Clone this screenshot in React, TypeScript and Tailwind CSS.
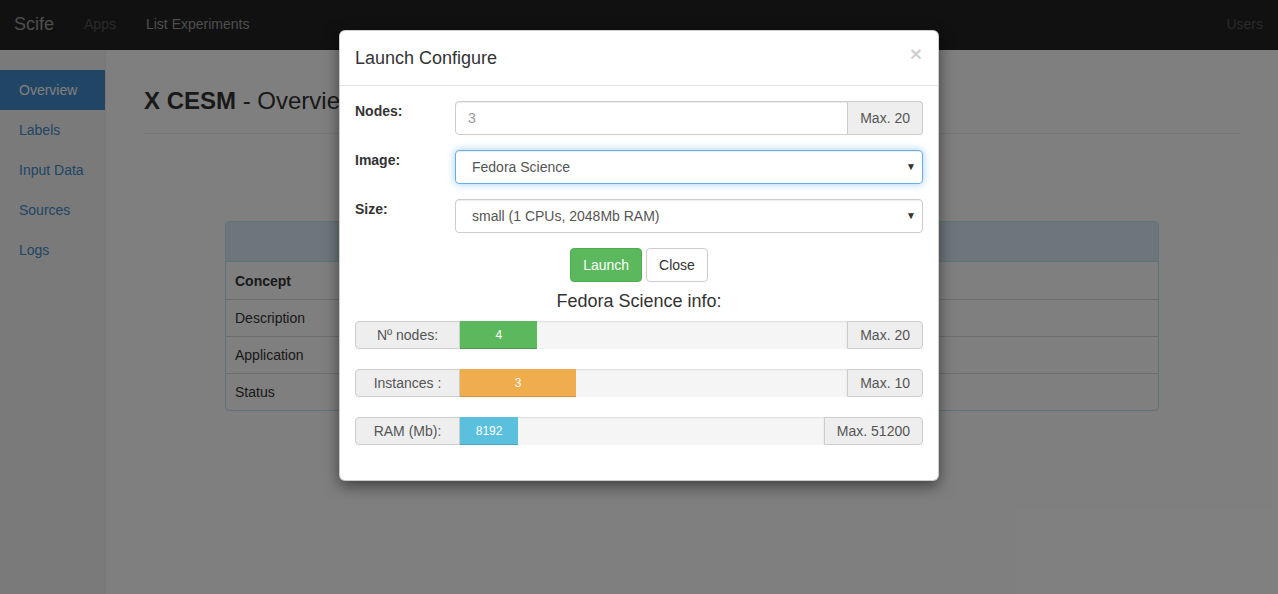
import React from "react";

function ProgressRow({
  label,
  value,
  max,
  pct,
  color,
}: {
  label: string;
  value: string;
  max: string;
  pct: string;
  color: string;
}) {
  return (
    <div className="flex h-[28px] mb-[20px]">
      <div className="w-[105px] shrink-0 flex items-center justify-center bg-[#eeeeee] border border-[#cccccc] rounded-l-[4px] text-[#555555]">
        {label}
      </div>
      <div className="flex-1 flex bg-[#f5f5f5] shadow-[inset_0_1px_2px_rgba(0,0,0,0.1)]">
        <div
          className={`${pct} ${color} h-full flex items-center justify-center text-white text-[12px] shadow-[inset_0_-1px_0_rgba(0,0,0,0.15)]`}
        >
          {value}
        </div>
      </div>
      <div className="shrink-0 flex items-center px-[12px] bg-[#eeeeee] border border-[#cccccc] rounded-r-[4px] text-[#555555]">
        {max}
      </div>
    </div>
  );
}

export default function App() {
  return (
    <div className="relative w-full h-[594px] overflow-hidden bg-white font-['Liberation_Sans',Arial,sans-serif] text-[14px] leading-[20px] text-[#333333]">
      {/* Navbar */}
      <div className="h-[50px] bg-[#222222] flex items-center">
        <div className="pl-[14px] pr-[15px] text-[18px] text-[#9d9d9d] -mt-[2px]">Scife</div>
        <div className="px-[15px] text-[#555555] -mt-[2px]">Apps</div>
        <div className="px-[15px] text-[#9d9d9d] -mt-[2px]">List Experiments</div>
        <div className="ml-auto pr-[15px] text-[#555555] -mt-[2px]">Users</div>
      </div>

      <div className="flex h-[544px]">
        {/* Sidebar */}
        <div className="w-[106px] shrink-0 bg-[#f5f5f5] border-r border-[#eeeeee] pt-[20px]">
          <div className="h-[40px] flex items-center pl-[19px] bg-[#428bca] text-white">Overview</div>
          <div className="h-[40px] flex items-center pl-[19px] text-[#428bca]">Labels</div>
          <div className="h-[40px] flex items-center pl-[19px] text-[#428bca]">Input Data</div>
          <div className="h-[40px] flex items-center pl-[19px] text-[#428bca]">Sources</div>
          <div className="h-[40px] flex items-center pl-[19px] text-[#428bca]">Logs</div>
        </div>

        {/* Main */}
        <div className="flex-1 pl-[38px] pr-[38px]">
          <div className="mt-[38px] pb-[19px] border-b border-[#eeeeee]">
            <div className="text-[24px] leading-[26px]">
              <span className="font-bold">X CESM</span> - Overview
            </div>
          </div>
          <div className="w-[934px] mx-auto mt-[87px] border border-[#bce8f1] rounded-[4px] overflow-hidden">
            <div className="h-[40px] bg-[#d9edf7] border-b border-[#bce8f1]"></div>
            <div className="h-[37px] flex items-center px-[9px] font-bold">Concept</div>
            <div className="h-[37px] flex items-center px-[9px] border-t border-[#dddddd]">Description</div>
            <div className="h-[37px] flex items-center px-[9px] border-t border-[#dddddd]">Application</div>
            <div className="h-[37px] flex items-center px-[9px] border-t border-[#dddddd]">Status</div>
          </div>
        </div>
      </div>

      {/* Backdrop */}
      <div className="absolute inset-0 bg-black/50"></div>

      {/* Modal */}
      <div className="absolute inset-0">
        <div className="ml-[339px] mt-[30px] w-[600px] bg-white border border-black/20 rounded-[6px] shadow-[0_5px_15px_rgba(0,0,0,0.5)]">
          <div className="flex items-center justify-between h-[55px] px-[15px] border-b border-[#e5e5e5]">
            <div className="text-[18px] leading-[24px] text-[#333333]">Launch Configure</div>
            <div className="text-[21px] font-bold leading-[21px] text-black/20 -mt-[9px] pr-[1px]">×</div>
          </div>
          <div className="p-[15px]">
            {/* Nodes */}
            <div className="flex mb-[15px]">
              <div className="w-[100px] shrink-0 font-bold">Nodes:</div>
              <div className="flex-1 flex h-[34px]">
                <div className="flex-1 flex items-center px-[12px] border border-[#cccccc] rounded-l-[4px] text-[#999999] shadow-[inset_0_1px_1px_rgba(0,0,0,0.075)]">
                  3
                </div>
                <div className="flex items-center px-[12px] bg-[#eeeeee] border border-l-0 border-[#cccccc] rounded-r-[4px] text-[#555555]">
                  Max. 20
                </div>
              </div>
            </div>
            {/* Image */}
            <div className="flex mb-[15px]">
              <div className="w-[100px] shrink-0 font-bold">Image:</div>
              <div className="flex-1 h-[34px] flex items-center pl-[16px] pr-[6px] border border-[#66afe9] rounded-[4px] text-[#555555] shadow-[inset_0_1px_1px_rgba(0,0,0,0.075),0_0_8px_rgba(102,175,233,0.6)]">
                <span className="flex-1">Fedora Science</span>
                <span className="text-[10px] text-[#333333]">▼</span>
              </div>
            </div>
            {/* Size */}
            <div className="flex mb-[15px]">
              <div className="w-[100px] shrink-0 font-bold">Size:</div>
              <div className="flex-1 h-[34px] flex items-center pl-[16px] pr-[6px] border border-[#cccccc] rounded-[4px] text-[#555555] shadow-[inset_0_1px_1px_rgba(0,0,0,0.075)]">
                <span className="flex-1">small (1 CPUs, 2048Mb RAM)</span>
                <span className="text-[10px] text-[#333333]">▼</span>
              </div>
            </div>
            {/* Buttons */}
            <div className="flex justify-center gap-[4px]">
              <div className="h-[34px] flex items-center px-[12px] bg-[#5cb85c] border border-[#4cae4c] rounded-[4px] text-white">
                Launch
              </div>
              <div className="h-[34px] flex items-center px-[12px] bg-white border border-[#cccccc] rounded-[4px] text-[#333333]">
                Close
              </div>
            </div>
            <div className="text-center text-[18px] leading-[20px] mt-[9px] mb-[10px]">Fedora Science info:</div>
            <ProgressRow label="Nº nodes:" value="4" max="Max. 20" pct="w-[20%]" color="bg-[#5cb85c]" />
            <ProgressRow label="Instances :" value="3" max="Max. 10" pct="w-[30%]" color="bg-[#f0ad4e]" />
            <ProgressRow label="RAM (Mb):" value="8192" max="Max. 51200" pct="w-[16%]" color="bg-[#5bc0de]" />
          </div>
        </div>
      </div>
    </div>
  );
}
